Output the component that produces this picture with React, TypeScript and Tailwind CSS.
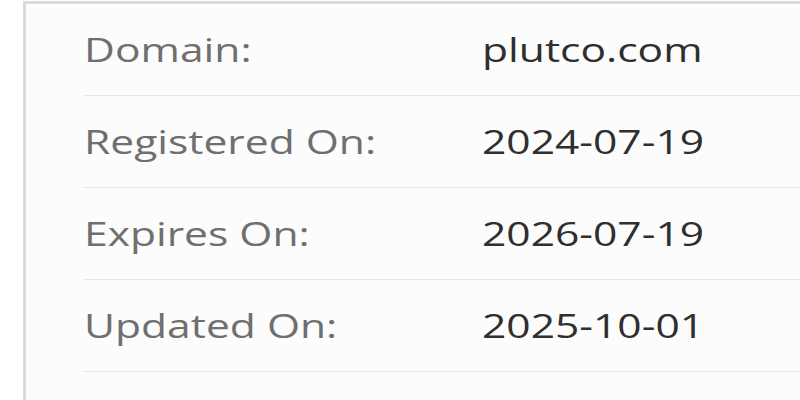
const rows = [
  { label: 'Domain:', value: 'plutco.com' },
  { label: 'Registered On:', value: '2024-07-19' },
  { label: 'Expires On:', value: '2026-07-19' },
  { label: 'Updated On:', value: '2025-10-01' },
]

export default function App() {
  return (
    <div className="h-[400px] w-[800px] overflow-hidden bg-white pl-[23px] pt-[1px] font-['Open_Sans',sans-serif]">
      <div className="h-[420px] border-l-[3px] border-t-[3px] border-[#dadada] bg-[#fcfcfc] pl-[58px]">
        {rows.map((row) => (
          <div key={row.label} className="flex h-[92px] items-center border-b border-[#e6e6e6] text-[32px]">
            <span className="w-[398px] shrink-0">
              <span className="inline-block origin-left scale-x-[1.33] text-[#6f6f6f]">{row.label}</span>
            </span>
            <span className="inline-block origin-left scale-x-[1.33] text-[#2f2f2f]">{row.value}</span>
          </div>
        ))}
      </div>
    </div>
  )
}
